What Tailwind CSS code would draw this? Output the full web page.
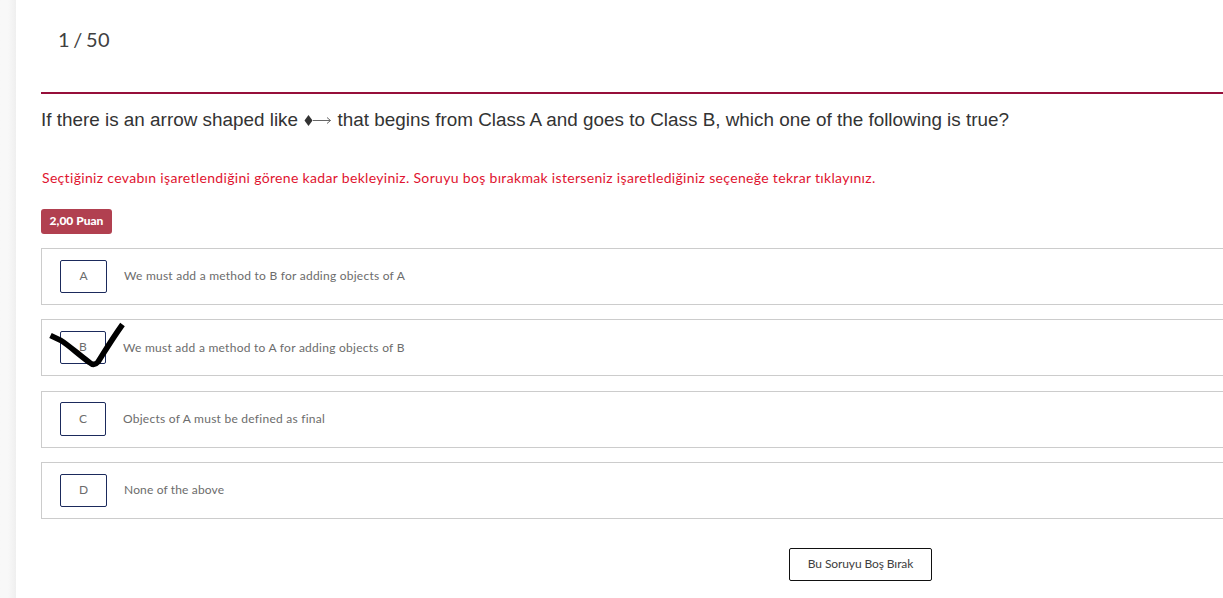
<!DOCTYPE html>
<html lang="tr">
<head>
<meta charset="utf-8">
<title>Sınav</title>
<script src="https://cdn.jsdelivr.net/npm/@tailwindcss/browser@4"></script>
</head>
<body class="flex h-[598px] w-[1223px] overflow-hidden bg-white font-[Lato,sans-serif] text-[#6c6c6c]">
<aside class="w-4 shrink-0 bg-linear-to-r from-[#f8f8f8] from-50% to-[#efefef]"></aside>
<main class="flex w-[1207px] shrink-0 flex-col pl-[25px] whitespace-nowrap">
  <div class="flex h-[94px] shrink-0 border-b-2 border-[#960f3a] pt-[25px] pl-[17px] text-[20px] leading-[28px] text-[#404040]"><span class="tracking-[0.3px] [word-spacing:-2px]">1 / 50</span></div>
  <h1 class="flex h-[52px] shrink-0 items-center font-['Liberation_Sans',Arial,sans-serif] text-[18.89px] text-[#333333]"><span class="whitespace-pre">If there is an arrow shaped like </span><svg class="h-5 w-[29px] shrink-0" viewBox="0 0 29 20" fill="none"><path d="M5.5 5 9.5 10.5l-4 5.5L1.5 10.5Z" fill="#333"/><path d="M10 10.5h17.5M24 7.5l3.5 3-3.5 3" stroke="#666"/></svg><span class="whitespace-pre"> that begins from Class A and goes to Class B, which one of the following is true?</span></h1>
  <p class="mt-[21px] h-[22px] shrink-0 pl-px text-[14px] leading-[21px] text-[#e01430]"><span class="tracking-[0.325px]">Seçtiğiniz cevabın işaretlendiğini görene kadar bekleyiniz. Soruyu boş bırakmak isterseniz işaretlediğiniz seçeneğe tekrar tıklayınız.</span></p>
  <div class="mt-5 flex h-[25px] w-[71px] shrink-0 items-center justify-center rounded-[3px] bg-[#b14050] pb-[2px] text-[12px] font-black text-white">2,00 Puan</div>
  <div class="mt-[14px] flex shrink-0 flex-col text-[12px]">
    <div class="flex h-[57px] items-start border border-r-0 border-[#cccccc] pt-[11px] pl-[18px]">
      <button class="h-[33px] w-[47px] rounded-[2px] border border-[#1b2a5c] pb-px">A</button><span class="ml-[17px] leading-[31px] tracking-[0.24px]">We must add a method to B for adding objects of A</span>
    </div>
    <div class="relative mt-[14px] flex h-[57px] items-start border border-r-0 border-[#cccccc] pt-[11px] pl-[18px]">
      <button class="h-[33px] w-[46px] rounded-[2px] border border-[#1b2a5c] pb-px">B</button><span class="ml-[17px] leading-[34px] tracking-[0.26px]">We must add a method to A for adding objects of B</span>
      <svg class="absolute top-0 left-0 h-[57px] w-[90px]" viewBox="0 0 90 57" fill="none"><path d="M8.5 15.5 19 20.5C27 25.5 36 34 47.500 42.500Q52 46.500 56 42C60 36 68 22 80.5 4.500" stroke="#000" stroke-width="5.6" stroke-linejoin="round"/></svg>
    </div>
    <div class="mt-[15px] flex h-[57px] items-start border border-r-0 border-[#cccccc] pt-[10px] pl-[18px]">
      <button class="h-[34px] w-[46px] rounded-[2px] border border-[#1b2a5c]">C</button><span class="ml-[17px] leading-[34px] tracking-[0.25px]">Objects of A must be defined as final</span>
    </div>
    <div class="mt-[14px] flex h-[57px] items-start border border-r-0 border-[#cccccc] pt-[11px] pl-[18px]">
      <button class="h-[33px] w-[47px] rounded-[2px] border border-[#1b2a5c] pb-px">D</button><span class="ml-[17px] leading-[31px] tracking-[0.15px]">None of the above</span>
    </div>
  </div>
  <button class="mt-[29px] ml-[748px] h-[33px] w-[143px] shrink-0 rounded-[2px] border border-[#111111] pb-px text-[12px] tracking-[-0.1px] text-[#404040]">Bu Soruyu Boş Bırak</button>
</main>
</body>
</html>
